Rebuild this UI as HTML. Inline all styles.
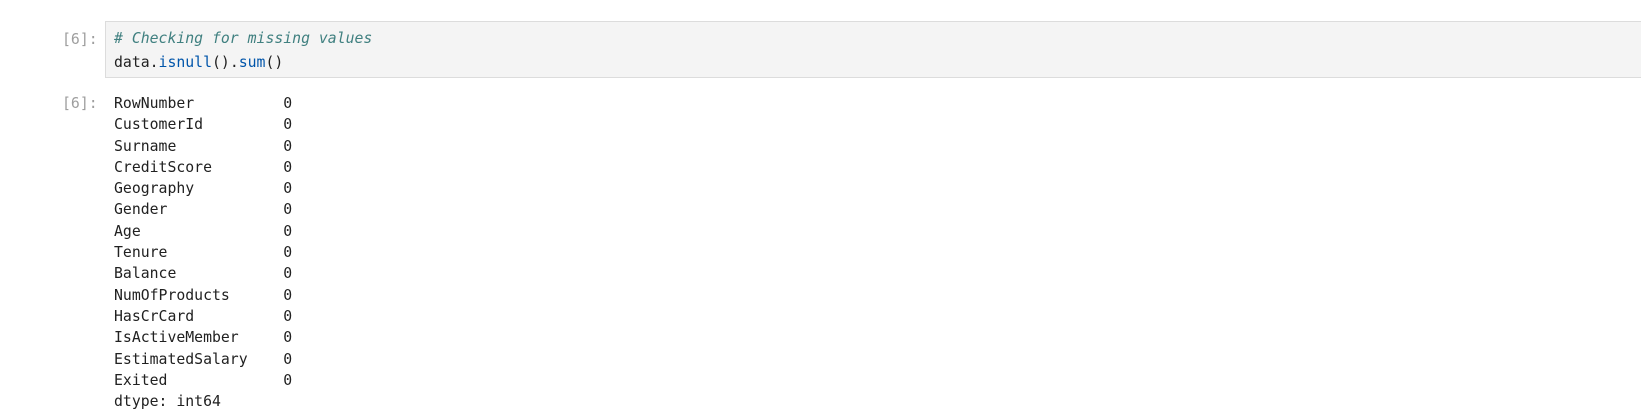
<!DOCTYPE html>
<html><head><style>
body{margin:0;background:#fff;width:1641px;height:419px;overflow:hidden;font-family:"DejaVu Sans Mono","Liberation Mono",monospace;font-size:14.8px;}
.p{position:absolute;left:62px;color:#9e9e9e;white-space:pre;}
.box{position:absolute;left:105px;top:21px;width:1540px;height:55px;background:#f4f4f4;border:1px solid #dcdcdc;}
.l{position:absolute;left:114px;white-space:pre;color:#212121;line-height:20px;}
.c{color:#408080;font-style:italic;}
.f{color:#0055aa;}
</style></head><body>
<div class="p" style="top:31px">[6]:</div>
<div class="box"></div>
<div class="l c" style="top:29px"># Checking for missing values</div>
<div class="l" style="top:53px">data.<span class="f">isnull</span>().<span class="f">sum</span>()</div>
<div class="p" style="top:95px">[6]:</div>
<div class="l" style="top:93px;line-height:21.3px">RowNumber          0
CustomerId         0
Surname            0
CreditScore        0
Geography          0
Gender             0
Age                0
Tenure             0
Balance            0
NumOfProducts      0
HasCrCard          0
IsActiveMember     0
EstimatedSalary    0
Exited             0
dtype: int64</div>
</body></html>
